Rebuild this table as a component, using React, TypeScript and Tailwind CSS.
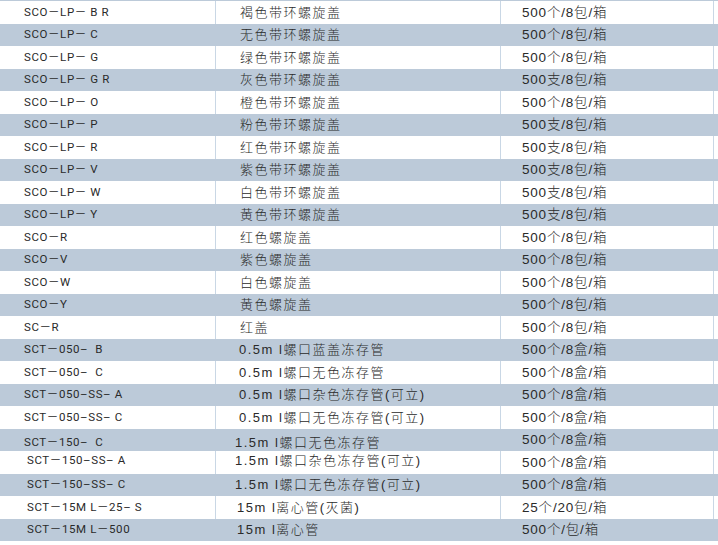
import React from "react";

type Row = { code: string; name: string; pack: string; c1?: string; c2?: string; shift?: string };

const rows: Row[] = [
  { code: "SCO－LP－ B R", name: "褐色带环螺旋盖", pack: "500个/8包/箱" },
  { code: "SCO－LP－ C", name: "无色带环螺旋盖", pack: "500个/8包/箱" },
  { code: "SCO－LP－ G", name: "绿色带环螺旋盖", pack: "500个/8包/箱" },
  { code: "SCO－LP－ G R", name: "灰色带环螺旋盖", pack: "500支/8包/箱" },
  { code: "SCO－LP－ O", name: "橙色带环螺旋盖", pack: "500个/8包/箱" },
  { code: "SCO－LP－ P", name: "粉色带环螺旋盖", pack: "500支/8包/箱" },
  { code: "SCO－LP－ R", name: "红色带环螺旋盖", pack: "500支/8包/箱" },
  { code: "SCO－LP－ V", name: "紫色带环螺旋盖", pack: "500支/8包/箱" },
  { code: "SCO－LP－ W", name: "白色带环螺旋盖", pack: "500支/8包/箱" },
  { code: "SCO－LP－ Y", name: "黄色带环螺旋盖", pack: "500支/8包/箱" },
  { code: "SCO－R", name: "红色螺旋盖", pack: "500个/8包/箱" },
  { code: "SCO－V", name: "紫色螺旋盖", pack: "500个/8包/箱" },
  { code: "SCO－W", name: "白色螺旋盖", pack: "500个/8包/箱" },
  { code: "SCO－Y", name: "黄色螺旋盖", pack: "500个/8包/箱" },
  { code: "SC－R", name: "红盖", pack: "500个/8包/箱" },
  { code: "SCT－050–  B", name: "0.5m l螺口蓝盖冻存管", pack: "500个/8盒/箱", c2: "pl-[23px]" },
  { code: "SCT－050–  C", name: "0.5m l螺口无色冻存管", pack: "500个/8盒/箱", c2: "pl-[23px]" },
  { code: "SCT－050–SS– A", name: "0.5m l螺口杂色冻存管(可立)", pack: "500个/8盒/箱", c2: "pl-[23px]" },
  { code: "SCT－050–SS– C", name: "0.5m l螺口无色冻存管(可立)", pack: "500个/8盒/箱", c2: "pl-[23px]" },
  { code: "SCT－150–  C", name: "1.5m l螺口无色冻存管", pack: "500个/8盒/箱", c2: "pl-[19px]", shift: "pt-[6px]" },
  { code: "SCT－150–SS– A", name: "1.5m l螺口杂色冻存管(可立)", pack: "500个/8盒/箱", c1: "pl-[27px]", c2: "pl-[19px]", shift: "pb-[4px]" },
  { code: "SCT－150–SS– C", name: "1.5m l螺口无色冻存管(可立)", pack: "500个/8盒/箱", c1: "pl-[27px]", c2: "pl-[19px]" },
  { code: "SCT－15M L－25– S", name: "15m l离心管(灭菌)", pack: "25个/20包/箱", c1: "pl-[27px]", c2: "pl-[21px]" },
  { code: "SCT－15M L－500", name: "15m l离心管", pack: "500个/包/箱", c1: "pl-[27px]", c2: "pl-[21px]" },
];

const font = { fontFamily: '"Liberation Sans", "Noto Sans CJK SC", sans-serif' };
const codeFont = { fontFamily: 'Roboto, "Noto Sans CJK SC", sans-serif' };

export default function App() {
  return (
    <div className="w-[718px] h-[545px] bg-white overflow-hidden text-[#2a2a2a] font-light" style={font}>
      <div className="h-px bg-[#bccad9]" />
      {rows.map((r, i) => {
        const blue = i % 2 === 1;
        const line = blue ? "border-[#bccad9]" : "border-[#c9d7e5]";
        return (
          <div
            key={i}
            className={`grid grid-cols-[216px_285px_213px_1fr] h-[22.5px] ${blue ? "bg-[#bccad9]" : "bg-white"}`}
          >
            <div
              className={`flex items-center border-r ${line} ${r.c1 ?? "pl-[24px]"} ${r.shift ?? ""} text-[11.5px] font-normal leading-none tracking-[0.6px] whitespace-pre`}
              style={codeFont}
            >
              {r.code}
            </div>
            <div
              className={`flex items-center border-r ${line} ${r.c2 ?? "pl-[24px]"} ${r.shift ?? ""} text-[13px] leading-none tracking-[1.5px] whitespace-pre`}
            >
              {r.name}
            </div>
            <div
              className={`flex items-center border-r ${line} pl-[21px] text-[13.5px] leading-none tracking-[0.8px] whitespace-pre`}
            >
              {r.pack}
            </div>
            <div />
          </div>
        );
      })}
    </div>
  );
}
